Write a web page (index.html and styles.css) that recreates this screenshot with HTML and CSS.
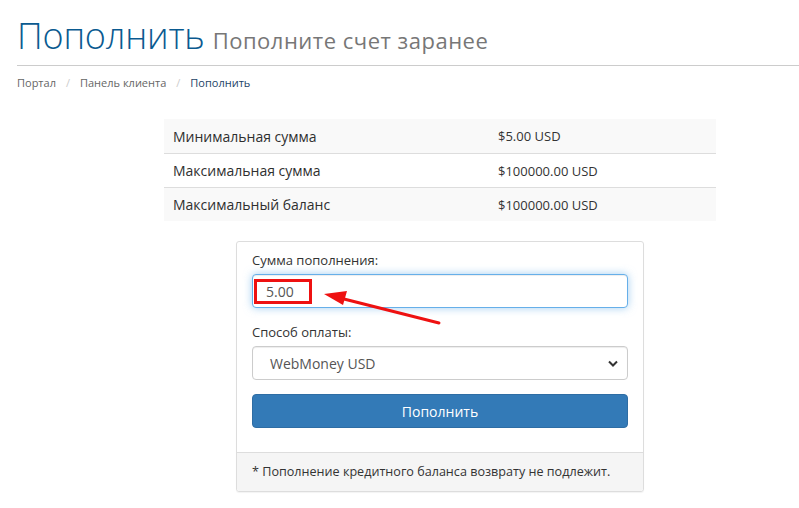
FILE: index.html
```html
<!DOCTYPE html>
<html lang="ru">
<head>
<meta charset="utf-8">
<link rel="stylesheet" href="styles.css">
</head>
<body>
<div class="page">
  <div class="header">
    <h1 class="title">Пополнить <small class="subtitle">Пополните счет заранее</small></h1>
  </div>
  <ol class="crumbs">
    <li><a href="#">Портал</a></li>
    <li class="sep">/</li>
    <li><a href="#">Панель клиента</a></li>
    <li class="sep">/</li>
    <li class="active">Пополнить</li>
  </ol>

  <table class="limits">
    <tr><td class="k">Минимальная сумма</td><td class="v">$5.00 USD</td></tr>
    <tr><td class="k">Максимальная сумма</td><td class="v">$100000.00 USD</td></tr>
    <tr><td class="k">Максимальный баланс</td><td class="v">$100000.00 USD</td></tr>
  </table>

  <div class="panel">
    <div class="panel-body">
      <div class="group">
        <label class="lbl">Сумма пополнения:</label>
        <div class="amount-wrap">
          <input class="control amount" type="text" value="5.00">
          <span class="mark"></span>
          <svg class="arrow" width="130" height="40" viewBox="0 0 130 40">
            <line x1="117" y1="35" x2="18" y2="10" stroke="#ee1111" stroke-width="3" stroke-linecap="round"/>
            <polygon points="2,6 25,3 21,17" fill="#ee1111"/>
          </svg>
        </div>
      </div>
      <div class="group">
        <label class="lbl">Способ оплаты:</label>
        <div class="select">
          <span class="select-text">WebMoney USD</span>
          <svg class="chev" width="10" height="7" viewBox="0 0 10 7"><path d="M1 1.5 L5 5.5 L9 1.5" fill="none" stroke="#333" stroke-width="2"/></svg>
        </div>
      </div>
      <button class="btn">Пополнить</button>
    </div>
    <div class="panel-footer">* Пополнение кредитного баланса возврату не подлежит.</div>
  </div>
</div>
</body>
</html>
```

FILE: styles.css
```css
html, body { margin: 0; padding: 0; background: #fff; }
body {
  font-family: "Open Sans", "Noto Sans", sans-serif;
  font-size: 13px;
  color: #333;
  overflow: hidden;
  width: 799px;
  height: 508px;
}
.page {
  margin-left: 17px;
  padding-top: 16px;
}
.header {
  border-bottom: 1px solid #ccc;
  padding-bottom: 5px;
}
.title {
  margin: 0;
  font-family: "Open Sans", sans-serif;
  font-weight: 300;
  font-size: 36px;
  line-height: 40px;
  color: #0a5a90;
  letter-spacing: -0.2px;
}
.subtitle {
  font-size: 22px;
  color: #777;
  font-weight: 400;
  letter-spacing: 0.5px;
  margin-left: -1px;
}
.crumbs {
  list-style: none;
  margin: 0;
  padding: 8px 0 0;
  display: flex;
  gap: 8px;
  font-size: 11px;
  line-height: 18px;
}
.crumbs a { color: #666; text-decoration: none; }
.crumbs .sep { color: #ccc; padding: 0 2px; }
.crumbs .active { color: #1d4467; }

.limits {
  width: 552px;
  margin: 27px 0 0 147px;
  border-collapse: collapse;
  font-size: 13px;
}
.limits td {
  height: 33px;
  padding: 0 9px;
  border-top: 1px solid #ddd;
  vertical-align: middle;
}
.limits tr:first-child td { border-top: none; height: 34px; }
.limits tr:nth-child(odd) td { background: #f9f9f9; }
.limits .k { width: 307px; font-weight: 500; font-size: 14px; color: #2f2f2f; }

.panel {
  width: 406px;
  margin: 20px 0 0 219px;
  border: 1px solid #ddd;
  border-radius: 3px;
  box-shadow: 0 1px 1px rgba(0,0,0,0.05);
}
.panel-body { padding: 9px 15px 24px; }
.group { margin-bottom: 15px; }
.lbl {
  display: block;
  font-weight: 400;
  font-size: 13px;
  line-height: 18px;
  margin-bottom: 5px;
}
.amount-wrap { position: relative; }
.control {
  box-sizing: border-box;
  width: 376px;
  height: 34px;
  margin: 0;
  border: 1px solid #66afe9;
  border-radius: 4px;
  box-shadow: inset 0 1px 1px rgba(0,0,0,.075), 0 0 8px rgba(102,175,233,.6);
  padding: 0 13px;
  font-family: "Open Sans", sans-serif;
  font-size: 14px;
  color: #555;
  outline: none;
  display: block;
}
.mark {
  position: absolute;
  left: 2px;
  top: 5px;
  width: 58px;
  height: 25px;
  box-sizing: border-box;
  border: 3px solid #ee1111;
}
.arrow {
  position: absolute;
  left: 70px;
  top: 14px;
}
.select {
  box-sizing: border-box;
  width: 376px;
  height: 34px;
  border: 1px solid #ccc;
  border-radius: 4px;
  box-shadow: inset 0 1px 1px rgba(0,0,0,.075);
  display: flex;
  align-items: center;
  justify-content: space-between;
  padding: 0 9px 0 17px;
  font-size: 14px;
  color: #555;
}
.btn {
  display: block;
  width: 376px;
  height: 34px;
  margin-top: -1px;
  border: 1px solid #2e6da4;
  border-radius: 4px;
  background: #337ab7;
  color: #fff;
  font-family: "Open Sans", sans-serif;
  font-size: 14px;
}
.panel-footer {
  background: #f5f5f5;
  border-top: 1px solid #ddd;
  padding: 10px 15px 10px;
  line-height: 18px;
  font-size: 12.6px;
  border-radius: 0 0 3px 3px;
}
```
